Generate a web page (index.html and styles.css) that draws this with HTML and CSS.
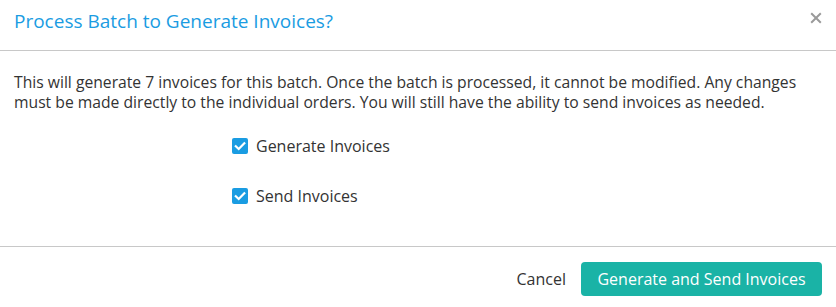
FILE: index.html
```html
<!DOCTYPE html>
<html>
<head>
<meta charset="utf-8">
<link rel="stylesheet" href="styles.css">
</head>
<body>
<div class="modal">
  <div class="modal-header">
    <h4 class="modal-title">Process Batch to Generate Invoices?</h4>
    <button class="close" aria-label="Close">
      <svg width="12" height="12" viewBox="0 0 12 12"><path d="M1.2 1.2 L10.8 10.8 M10.8 1.2 L1.2 10.8" stroke="#9a9a9a" stroke-width="2" fill="none"/></svg>
    </button>
  </div>
  <div class="modal-body">
    <p class="intro">This will generate 7 invoices for this batch. Once the batch is processed, it cannot be modified. Any changes must be made directly to the individual orders. You will still have the ability to send invoices as needed.</p>
    <div class="options">
      <label class="option"><span class="box"><svg width="16" height="16" viewBox="0 0 16 16"><path d="M3.8 8.2 L6.7 11 L12.3 5.2" stroke="#fff" stroke-width="2.2" fill="none" stroke-linecap="square"/></svg></span>Generate Invoices</label>
      <label class="option"><span class="box"><svg width="16" height="16" viewBox="0 0 16 16"><path d="M3.8 8.2 L6.7 11 L12.3 5.2" stroke="#fff" stroke-width="2.2" fill="none" stroke-linecap="square"/></svg></span>Send Invoices</label>
    </div>
  </div>
  <div class="modal-footer">
    <button class="btn-link">Cancel</button>
    <button class="btn-primary">Generate and Send Invoices</button>
  </div>
</div>
</body>
</html>
```
FILE: styles.css
```css
html, body {
  margin: 0;
  padding: 0;
  background: #fff;
}
body {
  font-family: "Open Sans", "Liberation Sans", sans-serif;
  color: #333;
}
.modal {
  width: 836px;
  height: 307px;
  display: flex;
  flex-direction: column;
}
.modal-header {
  height: 51px;
  border-bottom: 1px solid #c8c8c8;
  display: flex;
  align-items: flex-start;
  justify-content: space-between;
  padding: 0 14px;
  box-sizing: border-box;
}
.modal-title {
  margin: 8px 0 0 0;
  font-size: 19px;
  font-weight: 400;
  color: #1a9ce2;
  line-height: 26px;
}
.close {
  border: 0;
  background: none;
  padding: 0;
  width: 12px;
  height: 12px;
  margin-top: 12px;
  display: flex;
}
.modal-body {
  padding: 21px 14px 0 14px;
  height: 196px;
  box-sizing: border-box;
  border-bottom: 1px solid #c8c8c8;
}
.intro {
  margin: 0;
  font-size: 15.7px;
  line-height: 20px;
  color: #333;
}
.options {
  display: flex;
  flex-direction: column;
  gap: 28px;
  padding-left: 218px;
  margin-top: 23px;
}
.option {
  display: flex;
  align-items: center;
  font-size: 16px;
  line-height: 22px;
  color: #333;
}
.box {
  width: 16px;
  height: 16px;
  border-radius: 2px;
  background: #1a9ce2;
  display: inline-flex;
  margin-right: 8px;
}
.modal-footer {
  display: flex;
  justify-content: flex-end;
  align-items: center;
  padding: 15px 14px 0 0;
  gap: 15px;
}
.btn-link {
  border: 0;
  background: none;
  font-family: inherit;
  font-size: 16px;
  color: #333;
  padding: 0;
}
.btn-primary {
  border: 0;
  background: #1ab3a6;
  color: #fff;
  font-family: inherit;
  font-size: 16px;
  border-radius: 4px;
  height: 34px;
  width: 241px;
  padding: 0;
}
```
